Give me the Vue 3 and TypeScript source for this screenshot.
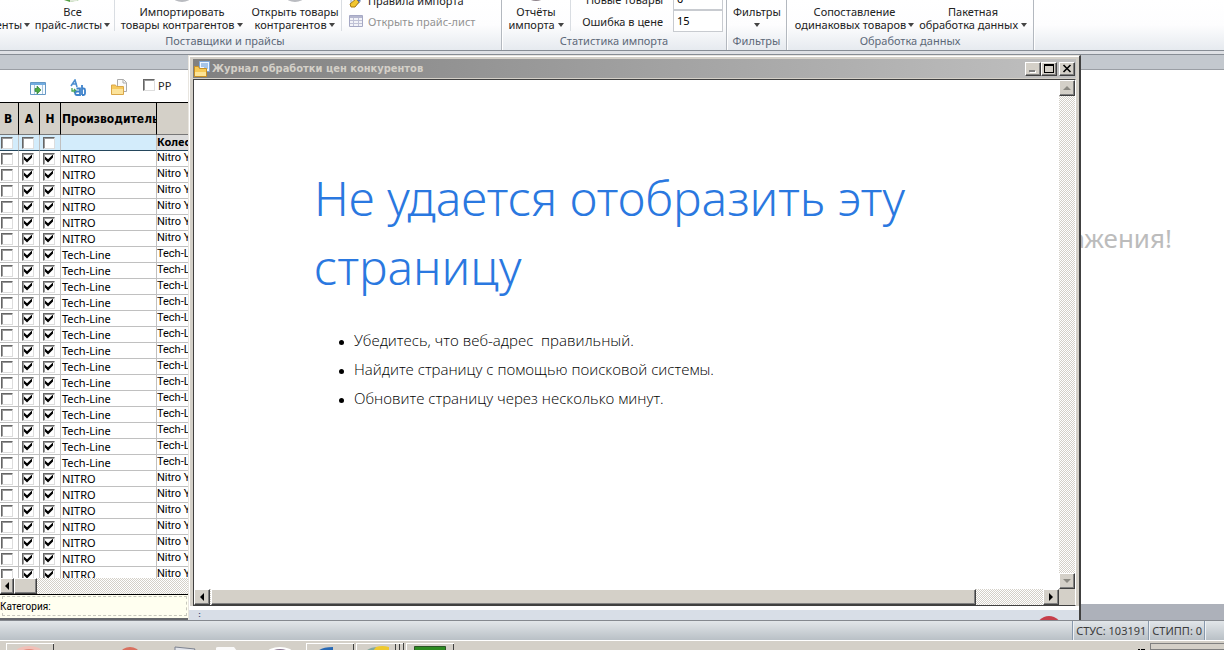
<script setup lang="ts">
import { ref } from 'vue'

interface Row { brand: string; name: string; a: boolean; h: boolean; b: boolean }

const make = (brand: string, name: string, count: number): Row[] =>
  Array.from({ length: count }, () => ({ brand, name, b: false, a: true, h: true }))

const rows = ref<Row[]>([
  ...make('NITRO', 'Nitro Y', 6),
  ...make('Tech-Line', 'Tech-L', 14),
  ...make('NITRO', 'Nitro Y', 7),
])

const newItems = ref('0')
const priceErrors = ref('15')
const pp = ref(false)

const tips = [
  'Убедитесь, что веб-адрес\u00a0 правильный.',
  'Найдите страницу с помощью поисковой системы.',
  'Обновите страницу через несколько минут.',
]
</script>

<template>
  <div class="app">
    <header class="ribbon">
      <section class="group suppliers">
        <div class="items">
          <button class="big w-agents">
            <span>&nbsp;</span>
            <span>Контрагенты<i class="arrow near"></i></span>
          </button>
          <button class="big w-lists">
            <svg class="icon" viewBox="0 0 32 32"><path d="M2 2h20v28l-9 2-6-2z" fill="#58a046" /><path d="M13 28l7-1v4l-7 1z" fill="#dfe8d8" /></svg>
            <span>Все</span>
            <span>прайс-листы<i class="arrow near"></i></span>
          </button>
          <i class="divider"></i>
          <button class="big w-import">
            <svg class="icon" viewBox="0 0 32 32"><ellipse cx="16" cy="27" rx="9" ry="5" fill="#b9bbc0" /></svg>
            <span>Импортировать</span>
            <span>товары контрагентов <i class="arrow"></i></span>
          </button>
          <button class="big w-open">
            <svg class="icon" viewBox="0 0 32 32"><ellipse cx="16" cy="27" rx="9" ry="5" fill="#b9bbc0" /></svg>
            <span>Открыть товары</span>
            <span>контрагентов <i class="arrow"></i></span>
          </button>
          <i class="divider"></i>
          <div class="stack">
            <button class="small">
              <svg width="16" height="16" viewBox="0 0 16 16"><path d="M3 3h9v7l-4 3H3z" fill="#e8edf6" stroke="#8da0c0" /><path d="M2 12l6-5 3 3-4 5H3z" fill="#f2c62f" stroke="#a87a12" /><path d="M9 8l3-4 2 2-3 4z" fill="#4d6eb0" /></svg>
              Правила импорта
            </button>
            <button class="small" disabled>
              <svg width="16" height="16" viewBox="0 0 16 16"><path d="M1.500 2.500h13v11h-13z" fill="#f2f3f8" stroke="#a5a8c4" /><path d="M2 3h12v2H2z" fill="#b5b7cf" /><path d="M2 7.500h12M2 10.500h12M5.500 5v8M10.500 5v8" stroke="#c0c2d6" /></svg>
              Открыть прайс-лист
            </button>
          </div>
        </div>
        <div class="caption">Поставщики и прайсы</div>
      </section>
      <section class="group stats">
        <div class="items">
          <button class="big w-reports">
            <svg class="icon" viewBox="0 0 32 32"><circle cx="16" cy="18" r="13" fill="#8d8289" /></svg>
            <span>Отчёты</span>
            <span>импорта <i class="arrow"></i></span>
          </button>
          <i class="divider"></i>
          <div class="fields">
            <label for="new-items">Новые товары</label>
            <input id="new-items" v-model="newItems" type="text" />
            <label for="price-errors">Ошибка в цене</label>
            <input id="price-errors" v-model="priceErrors" type="text" />
          </div>
        </div>
        <div class="caption">Статистика импорта</div>
      </section>
      <section class="group filters">
        <div class="items">
          <button class="big w-filters"><span>Фильтры</span><span><i class="arrow"></i></span></button>
        </div>
        <div class="caption">Фильтры</div>
      </section>
      <section class="group data">
        <div class="items">
          <button class="big w-match">
            <svg class="icon" viewBox="0 0 32 32"><path d="M10 16h6l-3 14z" fill="#555" /></svg>
            <span>Сопоставление</span>
            <span>одинаковых товаров<i class="arrow near"></i></span>
          </button>
          <button class="big w-batch">
            <svg class="icon" viewBox="0 0 32 32"><path d="M13 16h6l-3 14z" fill="#555" /></svg>
            <span>Пакетная</span>
            <span>обработка данных <i class="arrow"></i></span>
          </button>
        </div>
        <div class="caption">Обработка данных</div>
      </section>
    </header>

    <main class="workspace">
      <div class="strip"></div>
      <div class="panes">
        <aside class="left">
          <div class="tools">
            <button aria-label="Перейти">
              <svg width="16" height="16" viewBox="0 0 16 16"><path d="M.5 2.500h15v12H.5z" fill="#f7fbff" stroke="#6598c5" /><path d="M1 3h14v2H1z" fill="#72ace0" /><path d="M4.500 5v9M12.500 5v9" stroke="#a9c6de" /><path d="M5 8.500h2V6l4 4-4 4v-2.500H5z" fill="#4eac42" stroke="#26772b" stroke-width=".6" /></svg>
            </button>
            <button aria-label="Заменить">
              <svg width="16" height="17" viewBox="0 0 16 17" fill="none"><path d="M1 7l4-6 2 7M3 5h4" stroke="#4d8fd0" stroke-width="1.600" /><path d="M2 9v3h3M4 10l2 2-2 2" stroke="#47a452" stroke-width="1.300" /><path d="M6.500 9.500H10v6.500H7a1.700 1.700 0 010-3.500h3M12 6v10M12 9.500h1.500a1.500 1.500 0 011.500 1.500v3.500a1.500 1.500 0 01-1.500 1.500H12" stroke="#3d82cb" stroke-width="1.800" /></svg>
            </button>
            <button aria-label="Открыть папку">
              <svg width="17" height="17" viewBox="0 0 17 17"><path d="M7.500.5h6l3 3v9h-9z" fill="#fafafa" stroke="#aaa" /><path d="M13 .5V4h3" fill="none" stroke="#aaa" /><path d="M1.500 6h4l1 1.500h7v8h-12z" fill="#f6c95d" stroke="#d9a648" /><path d="M2 10h11v5H2z" fill="#fce39a" /></svg>
            </button>
            <label><input v-model="pp" type="checkbox" />РР</label>
          </div>
          <div class="grid">
            <table>
              <colgroup><col class="c-b" /><col class="c-a" /><col class="c-a" /><col class="c-p" /><col /></colgroup>
              <thead>
                <tr><th>В</th><th>А</th><th>Н</th><th class="maker">Производитель</th><th></th></tr>
                <tr class="filter">
                  <td><input type="checkbox" aria-label="В" /></td>
                  <td><input type="checkbox" aria-label="А" /></td>
                  <td><input type="checkbox" aria-label="Н" /></td>
                  <td></td>
                  <td class="kind">Колеса</td>
                </tr>
              </thead>
              <tbody>
                <tr v-for="(row, i) in rows" :key="i">
                  <td><input v-model="row.b" type="checkbox" aria-label="В" /></td>
                  <td><input v-model="row.a" type="checkbox" aria-label="А" /></td>
                  <td><input v-model="row.h" type="checkbox" aria-label="Н" /></td>
                  <td>{{ row.brand }}</td>
                  <td class="name">{{ row.name }}</td>
                </tr>
              </tbody>
            </table>
          </div>
          <div class="hbar">
            <button class="key" aria-label="Влево"><i class="tri l"></i></button>
            <div class="thumb short"></div>
          </div>
          <div class="category">Категория:</div>
        </aside>
        <section class="back"><p>отображения!</p></section>
      </div>

      <section class="window">
        <div class="title">
          <svg width="16" height="16" viewBox="0 0 16 16"><path d="M5.500.5h10v10h-10z" fill="#eef5ff" stroke="#7fa6d8" /><path d="M7 3h7M7 5h7M10 7h4" stroke="#5f93d2" /><path d="M.5 5.500h4l1 2h7v8H.5z" fill="#f8ca55" stroke="#c99024" /><path d="M1 11h11v4H1z" fill="#fde496" /></svg>
          <h2>Журнал обработки цен конкурентов</h2>
          <button class="key" aria-label="Свернуть"><svg width="10" height="9" viewBox="0 0 10 9"><path d="M2 7h6v2H2z" fill="#fff" /><path d="M1 6h6v2H1z" fill="#808080" /></svg></button>
          <button class="key" aria-label="Развернуть"><svg width="10" height="9" viewBox="0 0 10 9"><path d="M0 0h10v9H0zM1 2v6h8V2z" fill="#000" fill-rule="evenodd" /></svg></button>
          <button class="key close" aria-label="Закрыть"><svg width="10" height="9" viewBox="0 0 10 9"><path d="M1.500 1l7 7M8.500 1l-7 7" stroke="#000" stroke-width="1.600" /></svg></button>
        </div>
        <div class="view">
          <article>
            <h1>Не удается отобразить эту страницу</h1>
            <ul><li v-for="tip in tips" :key="tip">{{ tip }}</li></ul>
          </article>
          <div class="vbar">
            <button class="key" aria-label="Вверх"><i class="tri u"></i></button>
            <button class="key" aria-label="Вниз"><i class="tri d"></i></button>
          </div>
          <div class="hbar">
            <button class="key" aria-label="Влево"><i class="tri l"></i></button>
            <div class="thumb long"></div>
            <button class="key end" aria-label="Вправо"><i class="tri r"></i></button>
          </div>
          <div class="corner"></div>
        </div>
        <footer>
          <span>⋮</span>
          <svg width="22" height="20" viewBox="0 0 22 20"><circle cx="11" cy="13" r="13" fill="#c63e4b" /></svg>
        </footer>
      </section>
    </main>

    <div class="status"><span>СТУС: 103191</span><span>СТИПП: 0</span><span class="rest"></span></div>

    <nav class="taskbar">
      <button class="task raised first" aria-label="Окно 1"><svg width="48" height="8" viewBox="0 0 48 8"><ellipse cx="23" cy="9" rx="13" ry="6" fill="#f1c0b8" /><ellipse cx="23" cy="11" rx="9" ry="5" fill="#e58a7d" /></svg></button>
      <button class="task" aria-label="Окно 2"><svg width="48" height="8" viewBox="0 0 48 8"><ellipse cx="24" cy="10" rx="9" ry="6" fill="#d9705f" /></svg></button>
      <button class="task" aria-label="Окно 3"><svg width="48" height="8" viewBox="0 0 48 8"><path d="M19 8V4l20 2-2 4z" fill="#e2e4ea" stroke="#7c8290" /></svg></button>
      <button class="task" aria-label="Окно 4"><svg width="48" height="8" viewBox="0 0 48 8"><path d="M10 8V5q0-1 2-1h16l3 4z" fill="#fafafa" /></svg></button>
      <button class="task" aria-label="Окно 5"><svg width="48" height="8" viewBox="0 0 48 8"><ellipse cx="24" cy="10" rx="13" ry="6" fill="#fff" /><ellipse cx="24" cy="11" rx="10" ry="5" fill="#887390" /></svg></button>
      <button class="task raised" aria-label="Окно 6"><svg width="48" height="8" viewBox="0 0 48 8"><path d="M12 8q4-4 15-4v4z" fill="#2869b4" /></svg></button>
      <button class="task raised stacked" aria-label="Окно 7"><svg width="38" height="8" viewBox="0 0 38 8"><path d="M10 8q4-4 12-4v4z" fill="#83a9a0" /><path d="M20 4q6-2 13 0v4H17z" fill="#efc92e" /></svg></button>
      <button class="task raised" aria-label="Окно 8"><svg width="48" height="8" viewBox="0 0 48 8"><path d="M8.500 3.500h31v6h-31z" fill="#2d8b21" stroke="#2a5426" /></svg></button>
      <svg class="more" width="8" height="7" viewBox="0 0 8 7"><path d="M0 6h2v1H0zM3 6h2v1H3zM5 6h2v1H5z" fill="#000" /></svg>
      <div class="tray"></div>
    </nav>
  </div>
</template>

<style>
body { margin: 0; overflow: hidden; }
</style>

<style scoped>
* { box-sizing: border-box; }
.app { height: 100vh; display: flex; flex-direction: column; overflow: hidden; font: 11px/13px "Noto Sans", "Open Sans", sans-serif; color: #222; background: #fff; }
button { font: inherit; color: inherit; border: 0; padding: 0; background: none; }
h1, h2, p, ul { margin: 0; padding: 0; }

.ribbon { height: 51px; flex: none; display: flex; overflow: hidden; background: linear-gradient(#fff 0, #fdfdfe 50%, #e6eaef 100%); border-bottom: 1px solid #878d95; }
.group { flex: none; display: flex; flex-direction: column; justify-content: flex-end; padding-bottom: 1px; border-right: 1px solid #b3b8bf; box-shadow: 1px 0 #fff; }
.items { display: flex; align-items: flex-end; height: 31px; margin-bottom: 2px; }
.caption { height: 16px; line-height: 16px; text-align: center; color: #5c6878; }
.suppliers { width: 553px; margin-left: -51px; }
.stats { width: 225px; }
.filters { width: 60px; }
.data { width: 247px; }
.big { flex: none; display: flex; flex-direction: column; align-items: center; white-space: nowrap; }
.big > span { height: 13px; }
.icon { width: 32px; height: 32px; margin-bottom: 3px; }
.w-agents { width: 82px; align-items: flex-end; padding-right: 1px; }
.w-lists { width: 83px; }
.w-import { width: 134px; }
.w-open { width: 92px; }
.w-reports { width: 68px; }
.w-filters { width: 60px; }
.w-match { width: 130px; padding-left: 5px; }
.w-batch { width: 112px; }
.arrow { display: inline-block; width: 0; height: 0; border: 3px solid transparent; border-top: 4px solid #444; border-bottom: 0; vertical-align: 2px; }
.near { margin-left: 2px; }
.divider { flex: none; align-self: stretch; width: 1px; background: #d9dde2; }
.stack { padding: 0 0 2px 6px; display: flex; flex-direction: column; gap: 5px; }
.small { display: flex; align-items: center; gap: 4px; height: 16px; white-space: nowrap; }
.small:disabled { color: #929292; }
.fields { display: grid; grid-template-columns: 92px 50px; column-gap: 10px; align-items: center; margin-bottom: -1px; }
.fields label { text-align: right; white-space: nowrap; }
.fields input { height: 22px; width: 50px; border: 1px solid #c8cbd0; background: #fff; padding: 0 3px 2px; font: inherit; }

.workspace { position: relative; flex: 1; min-height: 0; display: flex; flex-direction: column; }
.strip { height: 19px; flex: none; background: linear-gradient(#dfe1e5 3px, #878d95 3px, #878d95 4px, #c3c8ce 4px); border-bottom: 1px solid #9a9ea4; }
.panes { flex: 1; min-height: 0; display: flex; }
.left { width: 189px; flex: none; display: flex; flex-direction: column; border-bottom: 2px solid #66686c; }
.tools { height: 32px; flex: none; display: flex; align-items: center; padding: 3px 0 0 30px; gap: 24px; }
.tools button { display: flex; }
.tools label { display: flex; align-items: center; gap: 3px; margin: -5px 0 0 -8px; }
.grid { flex: 1; min-height: 0; overflow: hidden; border-top: 1px solid #000; }
table { width: 100%; table-layout: fixed; border-collapse: separate; border-spacing: 0; }
.c-b { width: 19px; }
.c-a { width: 21px; }
.c-p { width: 96px; }
th { height: 32px; padding: 0 1px; font: bold 12px/16px "DejaVu Sans Condensed", "Noto Sans", sans-serif; background: #d4d0c8; border-right: 1px solid #000; border-bottom: 1px solid #777; white-space: nowrap; overflow: hidden; color: #000; }
th:first-child { padding-right: 3px; }
th.maker { text-align: left; }
td { height: 16px; padding: 0 1px; line-height: 15px; border-right: 1px solid #c0c0c0; border-bottom: 1px solid #c0c0c0; white-space: nowrap; overflow: hidden; color: #000; }
td:nth-child(2), td:nth-child(3) { padding-left: 3px; }
td:last-child, th:last-child { border-right: 0; }
td.name { padding: 0 0 2px; font-family: Roboto, sans-serif; line-height: 13px; }
.filter td { background: #d3ecfb; border-bottom-color: #24465c; }
.filter .kind { background: #dcdcdc; font-weight: bold; padding: 0 0 2px; line-height: 13px; }
input[type="checkbox"] { appearance: none; display: block; flex: none; width: 12px; height: 12px; margin: 0; background: #fff; border: 1px solid; border-color: #666 #ddd #ddd #666; box-shadow: inset 1px 1px #999; }
input[type="checkbox"]:checked::after { content: ""; display: block; width: 8px; height: 8px; margin: 1px; background: #000; clip-path: polygon(0 25%, 38% 60%, 100% 0, 100% 38%, 38% 100%, 0 62%); }

.hbar, .vbar { display: flex; background: repeating-conic-gradient(#fff 0 25%, #d4d0c8 0 50%) 0 0 / 2px 2px; }
.left .hbar { height: 16px; flex: none; }
.key, .thumb { background: #d4d0c8; border: 1px solid; border-color: #fff #404040 #404040 #fff; box-shadow: inset -1px -1px #808080; }
.key { flex: none; width: 16px; height: 16px; display: flex; align-items: center; justify-content: center; }
.left .key { width: 14px; }
.short { width: 23px; }
.long { width: calc(100% - 100px); margin-left: 1px; }
.end { margin-left: auto; }
.tri { width: 0; height: 0; border: 4px solid transparent; }
.l { border-right-color: #000; border-left: 0; }
.r { border-left-color: #000; border-right: 0; }
.u { border-bottom-color: #8b8982; border-top: 0; }
.d { border-top-color: #8b8982; border-bottom: 0; }
.category { height: 24px; flex: none; display: flex; align-items: center; border-top: 1px solid #000; background: #fffff0; font: 10px/13px Roboto, sans-serif; color: #000; outline: 1px dashed #c8c8be; outline-offset: -3px; }
.back { flex: 1; border-bottom: 16px solid #adb1ba; }
.back p { margin: 148px 52px 0 0; text-align: right; font-size: 26px; line-height: 40px; color: #bcbcbc; }

.window { position: absolute; inset: 4px 143px 0 188px; display: flex; flex-direction: column; background: #d4d0c8; border: 1px solid #e8e5df; border-right: 2px solid #404040; border-bottom: 0; padding: 3px 3px 0 4px; box-shadow: inset 1px 1px #fff; }
.title { height: 19px; flex: none; display: flex; align-items: center; padding: 0 1px; background: linear-gradient(90deg, #808080, #c0c0c0); }
.title h2 { flex: 1; margin-left: 2px; font: bold 11px/16px "DejaVu Sans Condensed", "Noto Sans", sans-serif; color: #d4d0c8; }
.title .key { height: 14px; }
.title .close { margin-left: 2px; }
.view { flex: 1; min-height: 0; display: grid; grid-template: minmax(0, 1fr) 16px / minmax(0, 1fr) 16px; border: 1px solid #404040; border-color: #404040 #fff #404040 #404040; margin-top: 1px; }
article { background: #fff; overflow: hidden; padding: 83px 120px 0 120px; }
h1 { font: 300 48px/69px "Noto Sans", "Open Sans", sans-serif; color: #2a78e0; }
ul { list-style: none; margin-top: 25px; }
li { display: flex; align-items: center; gap: 10px; padding-left: 25px; font: 300 15px/29px "Open Sans", "Noto Sans", sans-serif; color: #000; }
li::before { content: ""; width: 5px; height: 5px; margin-top: 3px; border-radius: 50%; background: #000; }
.vbar { flex-direction: column; justify-content: space-between; }
.corner { background: #d4d0c8; }
.window footer { flex: none; height: 14px; margin: 0 -3px 0 -4px; padding: 0 19px 0 5px; overflow: hidden; display: flex; justify-content: space-between; background: linear-gradient(#fff 4px, #d8dee7 4px); color: #3c4a73; }
footer span { padding-top: 4px; }
footer svg { margin-top: 10px; flex: none; }

.status { height: 21px; flex: none; display: flex; justify-content: flex-end; background: linear-gradient(#e2e6e9, #b9c0c6); border-top: 1px solid #85898f; border-bottom: 1px solid #fff; color: #3c3c3c; line-height: 20px; }
.status span { padding: 0 2px 0 3px; border-left: 1px solid #8899ad; box-shadow: inset 1px 0 #eef1f4; white-space: nowrap; }
.status .rest { width: 20px; padding: 0; }
.taskbar { height: 9px; flex: none; display: flex; gap: 2px; padding: 2px 0 0 6px; background: #d4d0c8; overflow: hidden; }
.task { flex: none; width: 48px; display: flex; }
.task svg { flex: none; }
.first { margin-right: 50px; }
.raised { box-shadow: inset 1px 1px #fff, inset -1px 0 #404040; }
.stacked { border-right: 1px solid #404040; box-shadow: inset 1px 1px #fff, inset -3px 0 #d4d0c8, inset -4px 0 #404040, inset -7px 0 #d4d0c8, inset -8px 0 #404040; }
.more { margin-left: auto; }
.tray { width: 74px; margin-left: 2px; border: 1px solid #808080; border-right: 0; }
</style>
